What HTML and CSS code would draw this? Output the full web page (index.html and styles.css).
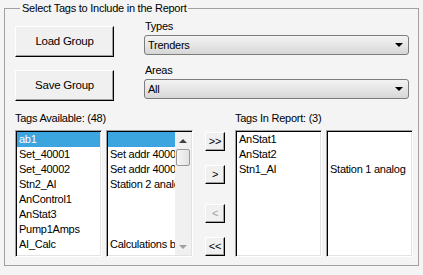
FILE: index.html
```html
<!DOCTYPE html>
<html>
<head>
    <title>Report Tags</title>
    <link rel="stylesheet" href="styles.css">
</head>
<body>
    <fieldset class="group">
        <legend>Select Tags to Include in the Report</legend>

        <div class="top-row">
            <div class="btn-col">
                <div class="btn big-btn">Load Group</div>
                <div class="btn big-btn">Save Group</div>
            </div>
            <div class="sel-col">
                <div class="sel-label">Types</div>
                <div class="combo">
                    <span>Trenders</span>
                    <span class="combo-arrow"></span>
                </div>
                <div class="sel-label second">Areas</div>
                <div class="combo">
                    <span>All</span>
                    <span class="combo-arrow"></span>
                </div>
            </div>
        </div>

        <div class="lists-row">
            <div class="list-col">
                <div class="list-label">Tags Available: (48)</div>
                <div class="list-pair">
                    <div class="listbox">
                        <div class="item selected">ab1</div>
                        <div class="item">Set_40001</div>
                        <div class="item">Set_40002</div>
                        <div class="item">Stn2_AI</div>
                        <div class="item">AnControl1</div>
                        <div class="item">AnStat3</div>
                        <div class="item">Pump1Amps</div>
                        <div class="item">AI_Calc</div>
                    </div>
                    <div class="listbox with-scroll">
                        <div class="list-items">
                            <div class="item selected">&nbsp;</div>
                            <div class="item">Set addr 40001 setpoint</div>
                            <div class="item">Set addr 40002 setpoint</div>
                            <div class="item">Station 2 analog input</div>
                            <div class="item">&nbsp;</div>
                            <div class="item">&nbsp;</div>
                            <div class="item">&nbsp;</div>
                            <div class="item">Calculations based</div>
                        </div>
                        <div class="scrollbar">
                            <div class="sb-arrow up"></div>
                            <div class="sb-thumb"></div>
                            <div class="sb-track"></div>
                            <div class="sb-arrow down"></div>
                        </div>
                    </div>
                </div>
            </div>

            <div class="move-col">
                <div class="move-group">
                    <div class="btn small-btn">&gt;&gt;</div>
                    <div class="btn small-btn">&gt;</div>
                </div>
                <div class="move-group">
                    <div class="btn small-btn disabled">&lt;</div>
                    <div class="btn small-btn">&lt;&lt;</div>
                </div>
            </div>

            <div class="list-col">
                <div class="list-label">Tags In Report: (3)</div>
                <div class="list-pair">
                    <div class="listbox">
                        <div class="item">AnStat1</div>
                        <div class="item">AnStat2</div>
                        <div class="item">Stn1_AI</div>
                    </div>
                    <div class="listbox">
                        <div class="item">&nbsp;</div>
                        <div class="item">&nbsp;</div>
                        <div class="item">Station 1 analog</div>
                    </div>
                </div>
            </div>
        </div>
    </fieldset>
</body>
</html>
```

FILE: styles.css
```css
body {
    margin: 0;
    background-color: #f4f4f4;
    font-family: "Liberation Sans", Arial, sans-serif;
    font-size: 11px;
    letter-spacing: -0.25px;
    color: #000;
}

.group {
    margin: 2px 4px 0 4px;
    padding: 0 0 0 10px;
    border: 1px solid #a0a0a0;
    box-sizing: border-box;
    height: 264px;
}

.group legend {
    margin-left: 5px;
    padding: 0 2px;
    line-height: 13px;
}

/* top area */
.top-row {
    display: flex;
    align-items: flex-start;
    margin-top: 2px;
}

.btn-col {
    display: flex;
    flex-direction: column;
    gap: 13px;
    padding-top: 9px;
    width: 99px;
}

.btn {
    background-color: #f0f0f0;
    border: 1px solid;
    border-color: #fff #000 #000 #fff;
    box-shadow: inset -1px -1px #a0a0a0;
    box-sizing: border-box;
    display: flex;
    align-items: center;
    justify-content: center;
    line-height: 1;
}

.big-btn {
    height: 31px;
    font-size: 11.5px;
}

.sel-col {
    margin-left: 30px;
    width: 265px;
}

.sel-label {
    height: 18px;
    line-height: 18px;
    padding-left: 1px;
}

.sel-label.second {
    height: 24px;
    line-height: 30px;
}

.combo {
    height: 20px;
    border: 1px solid #7c7c7c;
    border-radius: 3px;
    box-sizing: border-box;
    background: linear-gradient(#f3f3f3, #e6e6e6 50%, #d6d6d6);
    display: flex;
    align-items: center;
    justify-content: space-between;
    padding: 0 5px 0 3px;
}

.combo-arrow {
    width: 0;
    height: 0;
    border-left: 4px solid transparent;
    border-right: 4px solid transparent;
    border-top: 4px solid #000;
}

/* lists */
.lists-row {
    display: flex;
    margin-top: 10px;
}

.list-label {
    height: 19px;
    line-height: 14px;
}

.list-pair {
    display: flex;
    gap: 4px;
}

.listbox {
    width: 87px;
    height: 127px;
    box-sizing: border-box;
    background-color: #fff;
    border: 1px solid;
    border-color: #a0a0a0 #fff #fff #a0a0a0;
    box-shadow: inset 1px 1px #000, inset -1px -1px #e3e3e3;
    padding: 1px;
    overflow: hidden;
}

.item {
    height: 15px;
    line-height: 15px;
    padding-left: 2px;
    white-space: nowrap;
    overflow: hidden;
}

.item.selected {
    background-color: #3ca5e0;
    color: #fff;
}

.with-scroll {
    display: flex;
}

.list-items {
    flex: 1;
    min-width: 0;
}

.scrollbar {
    width: 16px;
    display: flex;
    flex-direction: column;
    background-color: #f0f0f0;
}

.sb-arrow {
    height: 17px;
    display: flex;
    align-items: center;
    justify-content: center;
}

.sb-arrow.up::after {
    content: "";
    border-left: 4px solid transparent;
    border-right: 4px solid transparent;
    border-bottom: 4px solid #404040;
}

.sb-arrow.down::after {
    content: "";
    border-left: 4px solid transparent;
    border-right: 4px solid transparent;
    border-top: 4px solid #a0a0a0;
}

.sb-thumb {
    height: 17px;
    margin: 0 1px;
    border: 1px solid #9a9a9a;
    border-radius: 2px;
    box-sizing: border-box;
    background: linear-gradient(to right, #f6f6f6, #e2e2e2);
}

.sb-track {
    flex: 1;
}

.move-col {
    width: 20px;
    margin: 21px 10px 0 12px;
    display: flex;
    flex-direction: column;
    gap: 20px;
}

.move-group {
    display: flex;
    flex-direction: column;
    gap: 14px;
}

.small-btn {
    height: 19px;
    width: 20px;
}

.small-btn.disabled {
    color: #a0a0a0;
}
```
